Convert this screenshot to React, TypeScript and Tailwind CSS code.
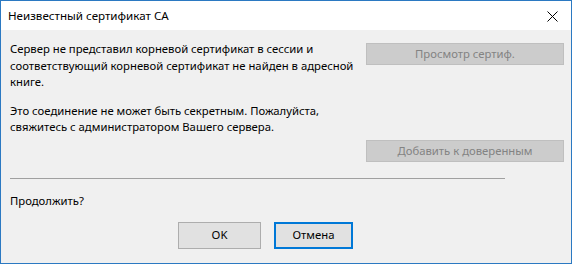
import React from 'react';

export default function App() {
  return (
    <div
      className="w-[572px] h-[264px] border border-[#2b79c2] bg-[#f0f0f0] flex flex-col text-[11.3px] text-black overflow-hidden"
      style={{ fontFamily: '"Noto Sans", "Open Sans", sans-serif' }}
    >
      {/* Title bar */}
      <div className="h-[29px] bg-white flex items-center justify-between pl-[7px] pr-[13px] shrink-0">
        <span className="text-[11.6px] leading-none">Неизвестный сертификат CA</span>
        <svg width="11" height="11" viewBox="0 0 11 11" className="mt-[1px]">
          <path d="M0.5 0.5 L10.5 10.5 M10.5 0.5 L0.5 10.5" stroke="#000" strokeWidth="1" />
        </svg>
      </div>

      {/* Body */}
      <div className="flex flex-col pl-[9px] pr-[7px]">
        <div className="flex">
          <div className="w-[352px] pt-[11px] leading-[16.5px]">
            <p>
              Сервер не представил корневой сертификат в сессии и соответствующий корневой сертификат не найден в адресной книге.
            </p>
            <p className="mt-[12px]">
              Это соединение не может быть секретным. Пожалуйста, свяжитесь с администратором Вашего сервера.
            </p>
          </div>
          <div className="ml-auto w-[198px] pt-[13px] flex flex-col">
            <button className="h-[22px] bg-[#cccccc] border border-[#bfbfbf] text-[#838383]">
              Просмотр сертиф.
            </button>
            <button className="h-[22px] mt-[75px] bg-[#cccccc] border border-[#bfbfbf] text-[#838383]">
              Добавить к доверенным
            </button>
          </div>
        </div>

        <div className="w-[495px] h-px bg-[#a0a0a0] mt-[16px]" />

        <div className="mt-[14px] leading-[16px]">Продолжить?</div>

        <div className="flex gap-[13px] mt-[13px] pl-[168px]">
          <button className="w-[83px] h-[27px] bg-[#e1e1e1] border border-[#adadad]">OK</button>
          <button className="w-[79px] h-[27px] bg-[#e1e1e1] border-2 border-[#0078d7]">Отмена</button>
        </div>
      </div>
    </div>
  );
}
